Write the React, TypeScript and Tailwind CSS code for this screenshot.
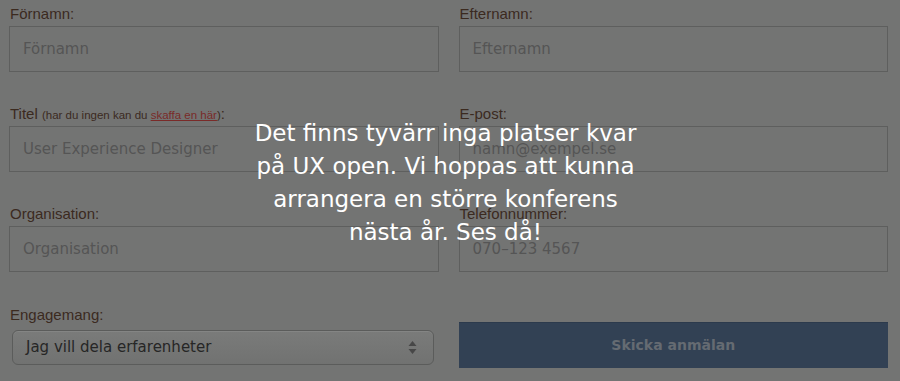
import React from "react";

const labelCls = "block h-[21px] text-[15px] leading-[18px] text-[#3b2a1f] pl-px whitespace-nowrap";
const inputCls =
  "h-[46px] w-full border border-[#5e5f5e] bg-transparent px-[13px] text-[15px] text-[#555555] flex items-center";

function Field({ label, placeholder }: { label: React.ReactNode; placeholder: string }) {
  return (
    <div className="flex flex-col">
      <div className={labelCls} style={{ fontFamily: '"Liberation Sans", Arial, sans-serif' }}>
        {label}
      </div>
      <div className={inputCls} style={{ fontFamily: '"DejaVu Sans", sans-serif' }}>
        {placeholder}
      </div>
    </div>
  );
}

export default function App() {
  return (
    <div className="relative h-[381px] w-[900px] overflow-hidden bg-[#737473]">
      <div className="pl-[9px] pr-[12px] pt-[5px]">
        <div className="grid grid-cols-2 gap-x-[20px] gap-y-[33px]">
          <Field label="Förnamn:" placeholder="Förnamn" />
          <Field label="Efternamn:" placeholder="Efternamn" />
          <Field
            label={
              <>
                Titel{" "}
                <span className="text-[11.5px]">
                  (har du ingen kan du{" "}
                  <span className="text-[#7a2b29] underline">skaffa en här</span>)
                </span>
                :
              </>
            }
            placeholder="User Experience Designer"
          />
          <Field label="E-post:" placeholder="namn@exempel.se" />
          <Field label="Organisation:" placeholder="Organisation" />
          <Field label="Telefonnummer:" placeholder="070–123 4567" />
        </div>
        <div className="mt-[34px] grid grid-cols-2 gap-x-[20px]">
          <div className="flex flex-col">
            <div className={labelCls} style={{ fontFamily: '"Liberation Sans", Arial, sans-serif' }}>
              Engagemang:
            </div>
            <div
              className="ml-[3px] mr-[5px] mt-[3px] flex h-[35px] items-center justify-between rounded-[6px] border border-[#5b5c5b] bg-gradient-to-b from-[#7a7b7a] to-[#717271] pl-[13px] pr-[16px] text-[15px] text-[#262626] shadow-[inset_0_1px_0_rgba(255,255,255,0.08)]"
              style={{ fontFamily: '"DejaVu Sans", sans-serif' }}
            >
              <span>Jag vill dela erfarenheter</span>
              <svg width="9" height="15" viewBox="0 0 9 15">
                <path d="M4.5 1 L8.5 6 H0.5 Z" fill="#474747" />
                <path d="M4.5 14 L8.5 9 H0.5 Z" fill="#474747" />
              </svg>
            </div>
          </div>
          <div className="flex flex-col">
            <button
              className="mt-[16px] h-[46px] w-full border-t border-[#2c3a4c] bg-[#324154] text-[14px] font-bold text-[#656b72]"
              style={{ fontFamily: '"DejaVu Sans", sans-serif' }}
            >
              Skicka anmälan
            </button>
          </div>
        </div>
      </div>
      <div
        className="absolute left-0 right-[9px] top-[117px] text-center text-[23px] leading-[33px] text-white"
        style={{ fontFamily: '"DejaVu Sans", sans-serif' }}
      >
        Det finns tyvärr inga platser kvar
        <br />
        på UX open. Vi hoppas att kunna
        <br />
        arrangera en större konferens
        <br />
        nästa år. Ses då!
      </div>
    </div>
  );
}
